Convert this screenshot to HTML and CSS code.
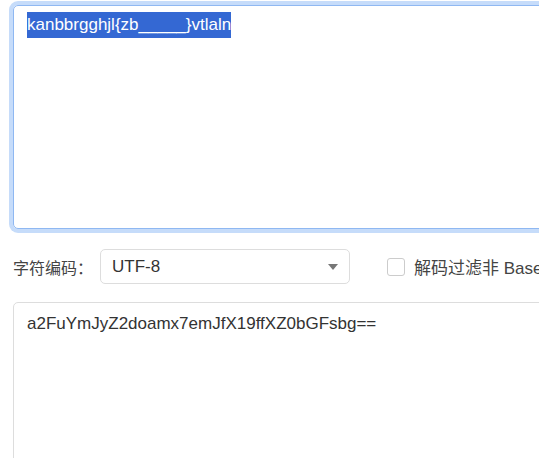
FILE: index.html
```html
<!DOCTYPE html>
<html lang="zh-CN">
<head>
    <meta charset="UTF-8">
    <meta name="viewport" content="width=device-width, initial-scale=1.0">
    <title>Base64 编码/解码</title>
    <link rel="stylesheet" href="styles.css">
</head>
<body>
    <div class="page">
        <!-- 输入框（获得焦点，文字已选中） -->
        <div class="text-box text-box-focus"><span class="selected">kanbbrgghjl{zb_____}vtlaln</span></div>

        <div class="options-row">
            <label class="field-label">字符编码：</label>
            <div class="select-box">
                <span class="select-value">UTF-8</span>
                <span class="select-caret"></span>
            </div>
            <label class="check-item">
                <span class="check-box"></span>
                <span class="check-text">解码过滤非 Base64 字符</span>
            </label>
        </div>

        <!-- 输出框 -->
        <div class="text-box text-box-output">a2FuYmJyZ2doamx7emJfX19ffXZ0bGFsbg==</div>
    </div>
</body>
</html>
```

FILE: styles.css
```css
html, body {
    margin: 0;
    padding: 0;
    overflow: hidden;
    background-color: #fff;
}

body {
    font-family: Arial, "Liberation Sans", "Noto Sans CJK SC", sans-serif;
    font-size: 17px;
    color: #333;
}

.page {
    padding: 5px 0 0 13px;
    width: 700px;
}

.text-box {
    box-sizing: border-box;
    width: 680px;
    border: 1px solid #ddd;
    border-radius: 5px;
    padding: 6px 13px;
    line-height: 26px;
    white-space: pre;
}

.text-box-focus {
    height: 224px;
    border-color: #8fb8f2;
    box-shadow: 0 0 0 4px #c6dcfa;
}

.selected {
    display: inline-block;
    height: 26px;
    background-color: #3468d3;
    color: #fff;
}

.options-row {
    display: flex;
    align-items: center;
    margin: 20px 0 18px;
    height: 35px;
}

.field-label {
    color: #444;
    font-size: 16px;
    width: 87px;
}

.select-box {
    box-sizing: border-box;
    width: 250px;
    height: 35px;
    border: 1px solid #ddd;
    border-radius: 5px;
    display: flex;
    align-items: center;
    justify-content: space-between;
    padding: 0 11px 0 11px;
}

.select-caret {
    width: 0;
    height: 0;
    border-left: 5px solid transparent;
    border-right: 5px solid transparent;
    border-top: 6px solid #777;
}

.check-item {
    display: flex;
    align-items: center;
    margin-left: 37px;
    white-space: nowrap;
}

.check-box {
    box-sizing: border-box;
    width: 18px;
    height: 18px;
    border: 1px solid #ccc;
    border-radius: 3px;
    margin-right: 9px;
}

.check-text {
    color: #444;
}

.text-box-output {
    height: 200px;
    padding-top: 8px;
}
```
